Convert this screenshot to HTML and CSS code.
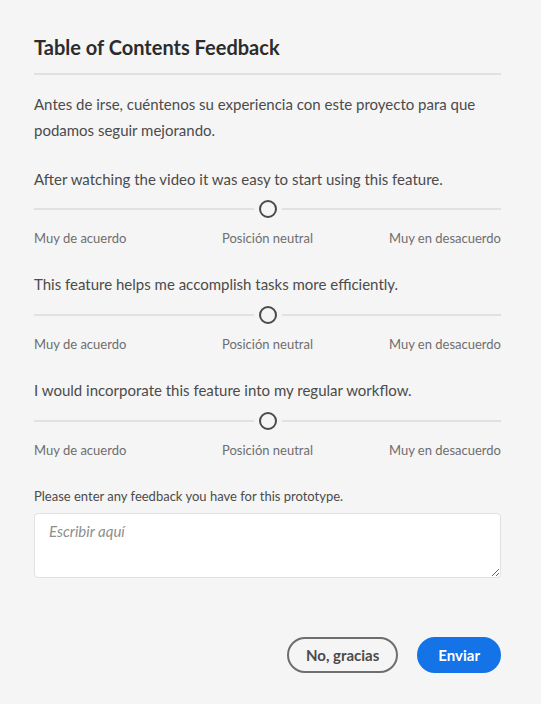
FILE: index.html
```html
<!DOCTYPE html>
<html lang="es">
<head>
<meta charset="utf-8">
<link rel="stylesheet" href="styles.css">
</head>
<body>
<div class="dialog">
  <h1 class="title">Table of Contents Feedback</h1>
  <p class="intro">Antes de irse, cuéntenos su experiencia con este proyecto para que podamos seguir mejorando.</p>

  <div class="question">
    <div class="q-text">After watching the video it was easy to start using this feature.</div>
    <div class="slider"><span class="track"></span><span class="handle"></span><span class="track"></span></div>
    <div class="scale"><span class="left">Muy de acuerdo</span><span class="mid">Posición neutral</span><span class="right">Muy en desacuerdo</span></div>
  </div>

  <div class="question">
    <div class="q-text">This feature helps me accomplish tasks more efficiently.</div>
    <div class="slider"><span class="track"></span><span class="handle"></span><span class="track"></span></div>
    <div class="scale"><span class="left">Muy de acuerdo</span><span class="mid">Posición neutral</span><span class="right">Muy en desacuerdo</span></div>
  </div>

  <div class="question">
    <div class="q-text">I would incorporate this feature into my regular workflow.</div>
    <div class="slider"><span class="track"></span><span class="handle"></span><span class="track"></span></div>
    <div class="scale"><span class="left">Muy de acuerdo</span><span class="mid">Posición neutral</span><span class="right">Muy en desacuerdo</span></div>
  </div>

  <label class="fb-label" for="fb">Please enter any feedback you have for this prototype.</label>
  <textarea id="fb" class="fb-input" placeholder="Escribir aquí"></textarea>

  <div class="actions">
    <button class="btn btn-secondary">No, gracias</button>
    <button class="btn btn-primary">Enviar</button>
  </div>
</div>
</body>
</html>
```
FILE: styles.css
```css
html, body {
  margin: 0;
  padding: 0;
  background: #f5f5f5;
  height: 100%;
}
body {
  font-family: Lato, "Noto Sans", sans-serif;
  color: #2c2c2c;
}
.dialog {
  padding: 35px 40px 0 34px;
}
.title {
  margin: 0;
  font-size: 20px;
  line-height: 24px;
  font-weight: 700;
  color: #2c2c2c;
  padding-bottom: 14px;
  border-bottom: 2px solid #e1e1e1;
}
.intro {
  margin: 16px 0 0;
  font-size: 15px;
  line-height: 26px;
  color: #4b4b4b;
}
.question {
  margin-top: 25px;
}
.question + .question {
  margin-top: 26px;
}
.q-text {
  font-size: 15px;
  line-height: 22px;
  color: #4b4b4b;
}
.slider {
  margin-top: 9px;
  height: 20px;
  display: flex;
  align-items: center;
  gap: 5px;
}
.question + .question .slider {
  margin-top: 10px;
}
.track {
  flex: 1;
  height: 2px;
  background: #e1e1e1;
}
.handle {
  width: 18px;
  height: 18px;
  box-sizing: border-box;
  border: 2px solid #4b4b4b;
  border-radius: 50%;
  background: #f5f5f5;
}
.scale {
  margin-top: 10px;
  display: grid;
  grid-template-columns: 1fr auto 1fr;
  font-size: 13px;
  line-height: 18px;
  color: #6e6e6e;
}
.scale .left { justify-self: start; }
.scale .right { justify-self: end; }
.fb-label {
  display: block;
  margin-top: 29px;
  font-size: 13px;
  line-height: 17px;
  color: #4b4b4b;
}
.fb-input {
  display: block;
  box-sizing: border-box;
  margin-top: 8px;
  width: 100%;
  height: 65px;
  border: 1px solid #e1e1e1;
  border-radius: 4px;
  background: #fff;
  padding: 7px 14px;
  font-family: inherit;
  font-size: 15px;
  line-height: 20px;
  color: #2c2c2c;
}
.fb-input::placeholder {
  font-style: italic;
  color: #8e8e8e;
}
.actions {
  margin-top: 59px;
  display: flex;
  justify-content: flex-end;
  gap: 19px;
}
.btn {
  height: 36px;
  border-radius: 18px;
  font-family: inherit;
  font-size: 15px;
  font-weight: 700;
  padding: 0 17px;
  box-sizing: border-box;
}
.btn-secondary {
  background: transparent;
  border: 2px solid #6e6e6e;
  color: #4b4b4b;
}
.btn-primary {
  background: #1473e6;
  border: 2px solid #1473e6;
  color: #fff;
  padding: 0 19px;
}
```
